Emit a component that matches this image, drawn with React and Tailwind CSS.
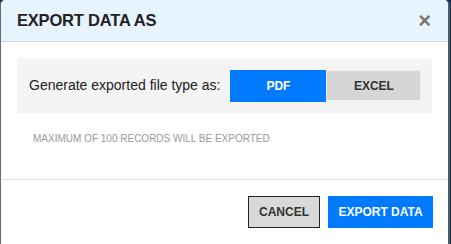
import React from 'react'

const App = () => {
    return (
        <div className="w-[451px] h-[244px] bg-[#0e2f5c] overflow-hidden" style={{ fontFamily: '"Liberation Sans", Arial, sans-serif' }}>
            <div className="w-[450px] h-[244px] bg-white rounded-t-[5px] border-l border-r-2 border-l-[#6b6b6b] border-r-[#5a5a5a] flex flex-col">
                <div className="h-[42px] bg-[#e8f4fd] rounded-t-[5px] border-b border-[#cfd8e0] flex items-center justify-between pl-4 pr-[17px]">
                    <h2 className="text-[16.5px] font-bold text-[#222] tracking-[-0.2px]">EXPORT DATA AS</h2>
                    <button className="text-[22px] leading-none font-bold text-[#777]">×</button>
                </div>

                <div className="px-4 pt-4">
                    <div className="bg-[#f4f4f4] h-[55px] flex items-center pl-3">
                        <span className="text-[14px] text-[#222] mr-[10px]">Generate exported file type as:</span>
                        <button className="w-[96px] h-[32px] bg-[#007bff] text-white text-xs font-bold">PDF</button>
                        <button className="w-[95px] h-[31px] bg-[#d6d6d6] border border-[#eeeeee] text-[#333] text-xs font-bold">EXCEL</button>
                    </div>
                    <p className="mt-[19px] pl-4 text-[10px] leading-[14px] text-[#999]">MAXIMUM OF 100 RECORDS WILL BE EXPORTED</p>
                </div>

                <div className="mt-auto border-t border-[#dddddd] h-[65px] flex justify-end items-start pt-4 pr-[15px] gap-2">
                    <button className="w-[72px] h-[32px] bg-[#d9d9d9] border border-[#222] text-[#333] text-xs font-bold">CANCEL</button>
                    <button className="w-[105px] h-[32px] bg-[#007bff] text-white text-xs font-bold">EXPORT DATA</button>
                </div>
            </div>
        </div>
    )
}

export default App
